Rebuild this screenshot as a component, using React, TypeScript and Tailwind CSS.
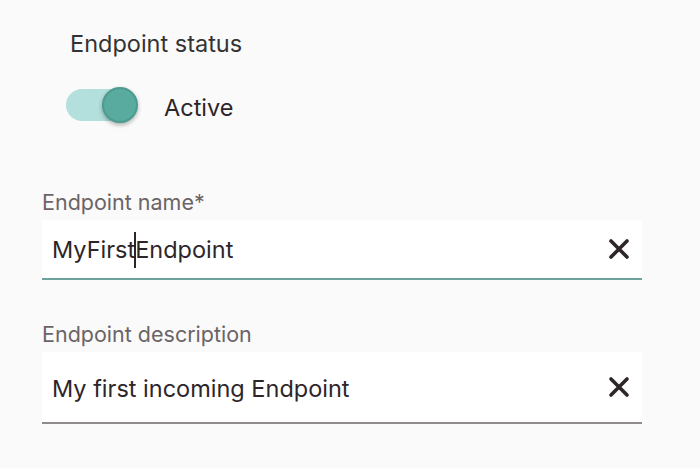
import { useState } from "react";

type FieldProps = {
  label: string;
  value: string;
  focused?: boolean;
  tall?: boolean;
};

function ClearIcon() {
  return (
    <svg width="22" height="22" viewBox="0 0 22 22" aria-hidden>
      <path d="M3 3 L19 19 M19 3 L3 19" stroke="#2d2529" strokeWidth="3.6" strokeLinecap="round" />
    </svg>
  );
}

function TextField({ label, value, focused, tall }: FieldProps) {
  return (
    <div className="flex flex-col">
      <label className="text-[21.5px] leading-[28px] text-[#6b6467] mb-[4px]">{label}</label>
      <div
        className={
          "flex items-center justify-between bg-white pl-[10px] pr-[12px] border-b-2 " +
          (tall ? "h-[72px] border-[#8f8a8c]" : "h-[60px] border-[#6ea39b]")
        }
      >
        <span className={"text-[23.5px] text-[#2d2529] leading-none " + (tall ? "mt-[3px]" : "mt-[6px]")}>
          {focused ? (
            <>
              MyFirst
              <span className="inline-block w-[2px] h-[36px] bg-[#2d2529] align-middle -mx-[1px] -mt-[4px]" />
              Endpoint
            </>
          ) : (
            value
          )}
        </span>
        <button type="button" className="flex items-center justify-center">
          <ClearIcon />
        </button>
      </div>
    </div>
  );
}

export default function App() {
  const [active, setActive] = useState(true);

  return (
    <div className="w-[700px] h-[468px] bg-[#fafafa] overflow-hidden font-['Inter',sans-serif]">
      <div className="w-[600px] ml-[42px] flex flex-col">
        {/* Statut */}
        <div className="pl-[28px] pt-[29px]">
          <p className="text-[23.5px] leading-[30px] text-[#333]">Endpoint status</p>
          <div className="flex items-center mt-[28px] -ml-[4px]">
            <button
              type="button"
              onClick={() => setActive(!active)}
              className="relative w-[72px] h-[36px] flex items-center"
            >
              <span className="absolute left-0 w-[60px] h-[32px] rounded-full bg-[#b3e0dc]" />
              <span className="absolute left-[36px] w-[36px] h-[36px] rounded-full bg-[#5aab9f] border-2 border-[#4c9b8f] shadow-[0_2px_4px_rgba(0,0,0,0.3)]" />
            </button>
            <span className="ml-[26px] translate-y-[3px] text-[23.5px] text-[#2d2529]">Active</span>
          </div>
        </div>

        <div className="mt-[65px]">
          <TextField label="Endpoint name*" value="MyFirstEndpoint" focused />
        </div>
        <div className="mt-[40px]">
          <TextField label="Endpoint description" value="My first incoming Endpoint" tall />
        </div>
      </div>
    </div>
  );
}
